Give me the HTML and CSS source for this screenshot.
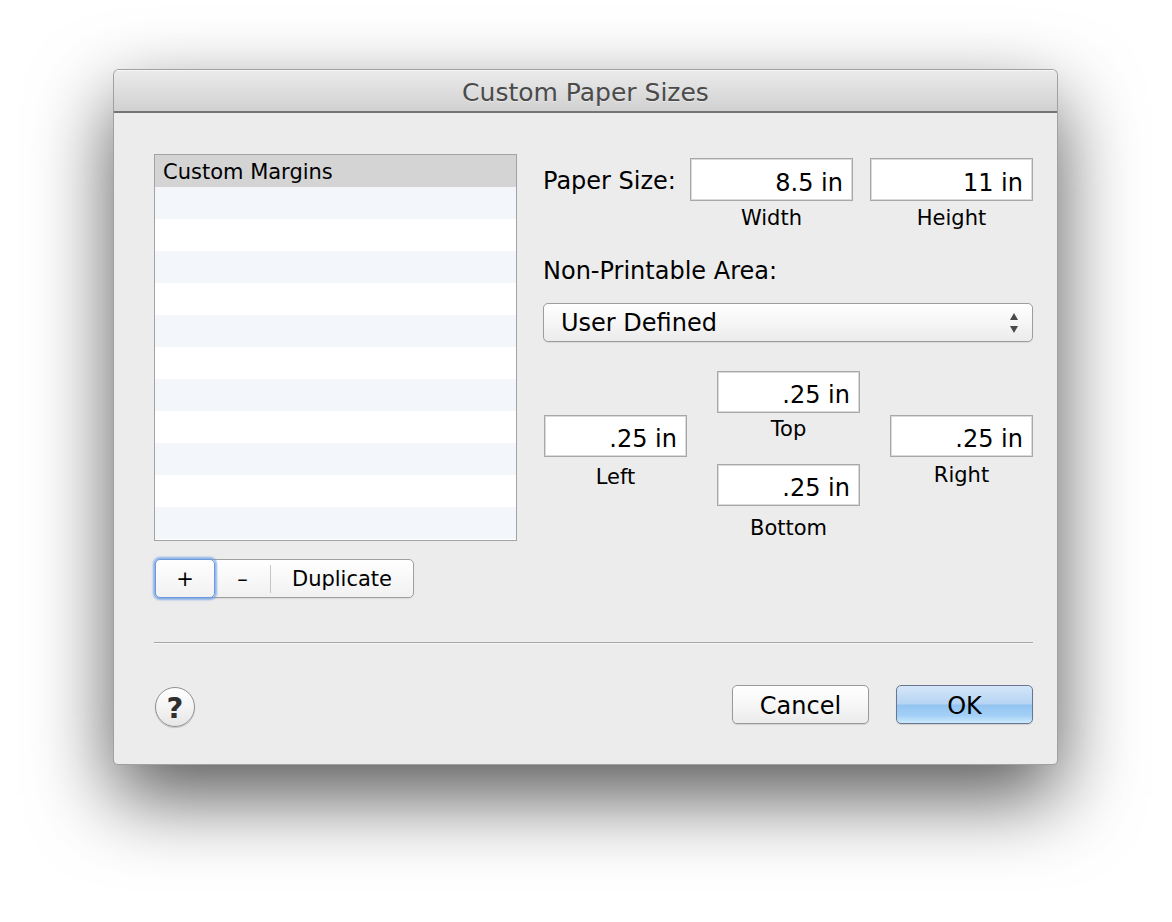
FILE: index.html
```html
<!DOCTYPE html>
<html>
<head>
<meta charset="utf-8">
<title>Custom Paper Sizes</title>
<link rel="stylesheet" href="styles.css">
</head>
<body>
<div class="stage">
  <div class="window">
    <div class="titlebar">Custom Paper Sizes</div>
    <div class="content">
      <div class="main">
        <div class="left">
          <div class="list">
            <div class="row selected">Custom Margins</div>
            <div class="row"></div>
            <div class="row"></div>
            <div class="row"></div>
            <div class="row"></div>
            <div class="row"></div>
            <div class="row"></div>
            <div class="row"></div>
            <div class="row"></div>
            <div class="row"></div>
            <div class="row"></div>
            <div class="row"></div>
          </div>
          <div class="segmented">
            <div class="seg seg-plus">+</div>
            <div class="seg seg-minus">–</div>
            <div class="seg-div"></div>
            <div class="seg seg-dup">Duplicate</div>
          </div>
        </div>
        <div class="right">
          <div class="paper">
            <div class="label-lg paper-label">Paper Size:</div>
            <div class="field paper-field">8.5 in</div>
            <div class="field paper-field paper-second">11 in</div>
            <div></div>
            <div class="caption paper-caption">Width</div>
            <div class="caption paper-caption paper-second">Height</div>
          </div>
          <div class="label-lg npa">Non-Printable Area:</div>
          <div class="popup">
            <span>User Defined</span>
            <svg class="arrows" width="8" height="20" viewBox="0 0 8 20">
              <path d="M4 0 L8 7 L0 7 Z" fill="#4a4a4a"/>
              <path d="M0 13 L8 13 L4 20 Z" fill="#4a4a4a"/>
            </svg>
          </div>
          <div class="margins">
            <div class="mcol mcol-side">
              <div class="field mfield">.25 in</div>
              <div class="caption cap-left">Left</div>
            </div>
            <div class="mcol">
              <div class="field mfield">.25 in</div>
              <div class="caption cap-top">Top</div>
              <div class="field mfield mfield-bottom">.25 in</div>
              <div class="caption cap-bottom">Bottom</div>
            </div>
            <div class="mcol mcol-side">
              <div class="field mfield">.25 in</div>
              <div class="caption cap-right">Right</div>
            </div>
          </div>
        </div>
      </div>
      <div class="sep"></div>
      <div class="footer">
        <div class="help">?</div>
        <div class="spacer"></div>
        <div class="btn btn-cancel">Cancel</div>
        <div class="btn btn-ok">OK</div>
      </div>
    </div>
  </div>
</div>
</body>
</html>
```
FILE: styles.css
```css
html, body {
  margin: 0;
  padding: 0;
  background: #ffffff;
}

body {
  width: 1172px;
  height: 922px;
  overflow: hidden;
  font-family: "DejaVu Sans", "Lucida Grande", "Noto Sans", sans-serif;
  color: #000;
}

.stage {
  padding: 69px 0 0 113px;
}

.window {
  width: 945px;
  box-sizing: border-box;
  border: 1px solid rgba(0, 0, 0, 0.32);
  border-radius: 6px 6px 5px 5px;
  background: #ececec;
  box-shadow: 0 32px 80px rgba(0, 0, 0, 0.66);
  overflow: hidden;
}

.titlebar {
  height: 36px;
  padding-top: 5px;
  line-height: 36px;
  text-align: center;
  font-size: 25px;
  color: #4b4b4b;
  text-shadow: 0 1px 0 rgba(255, 255, 255, 0.45);
  background: linear-gradient(#ebebeb, #d1d1d1);
  box-shadow: inset 0 1px 0 #f7f7f7;
  border-bottom: 2px solid #747474;
}

.content {
  padding: 41px 24px 37px 40px;
}

.main {
  display: flex;
  gap: 26px;
}

.left {
  width: 363px;
}

.list {
  height: 387px;
  box-sizing: border-box;
  border: 1px solid #a3a3a3;
  background: #fff;
  overflow: hidden;
}

.row {
  height: 32px;
  line-height: 32px;
  padding-left: 8px;
  font-size: 21px;
}

.row.selected {
  line-height: 34px;
}

.row:nth-child(even) {
  background: #f3f6fa;
}

.row.selected {
  background: #d4d4d4;
}

.segmented {
  margin: 18px 0 0 1px;
  display: flex;
  width: 259px;
  height: 39px;
  box-sizing: border-box;
  border: 1px solid #a0a0a0;
  border-radius: 5px;
  background: linear-gradient(#ffffff, #f1f1f1);
  box-shadow: 0 1px 1px rgba(0, 0, 0, 0.08);
}

.seg {
  font-size: 21px;
  line-height: 24px;
  display: flex;
  align-items: center;
  justify-content: center;
}

.seg-plus {
  width: 60px;
  margin: -1px 0 -1px -1px;
  box-sizing: border-box;
  border: 1px solid #6c9bdc;
  border-radius: 5px;
  background: linear-gradient(#ffffff, #f1f1f1);
  box-shadow: 0 0 2px 2px rgba(110, 160, 228, 0.75);
  position: relative;
  z-index: 1;
}

.seg-minus {
  width: 55px;
}

.seg-div {
  width: 1px;
  margin: 5px 0 4px;
  background: #c6c6c6;
}

.seg-dup {
  width: 142px;
}

.right {
  width: 490px;
  padding-top: 4px;
}

.paper {
  display: grid;
  grid-template-columns: 147px 163px 180px;
}

.paper-second {
  justify-self: end;
  width: 163px;
}

.label-lg {
  font-size: 24px;
  line-height: 28px;
  white-space: nowrap;
}

.paper-label {
  align-self: center;
  padding-top: 3px;
}

.field {
  box-sizing: border-box;
  border: 1px solid #a8a8a8;
  box-shadow: inset 0 0 0 1px #dadada;
  background: #fff;
  text-align: right;
  font-size: 24px;
  line-height: 28px;
  padding: 0 9px;
  white-space: nowrap;
}

.paper-field {
  height: 43px;
  padding-top: 10px;
}

.caption {
  font-size: 21px;
  line-height: 24px;
  text-align: center;
}

.paper-caption {
  margin-top: 5px;
}

.npa {
  margin-top: 27px;
}

.popup {
  margin-top: 18px;
  height: 39px;
  box-sizing: border-box;
  border: 1px solid #9d9d9d;
  border-radius: 5px;
  background: linear-gradient(#ffffff, #f6f6f6 50%, #ebebeb);
  box-shadow: 0 1px 1px rgba(0, 0, 0, 0.08);
  display: flex;
  align-items: center;
  justify-content: space-between;
  padding: 1px 14px 0 17px;
  font-size: 24px;
  line-height: 28px;
}

.arrows {
  display: block;
}

.margins {
  margin: 29px 0 0 1px;
  display: grid;
  grid-template-columns: repeat(3, 143px);
  justify-content: space-between;
  align-items: start;
}

.mcol {
  display: flex;
  flex-direction: column;
}

.mcol-side {
  margin-top: 44px;
}

.mfield {
  height: 42px;
  padding-top: 9px;
}

.mfield-bottom {
  margin-top: 23px;
}

.cap-top {
  margin-top: 4px;
}

.cap-bottom {
  margin-top: 10px;
}

.cap-left {
  margin-top: 8px;
}

.cap-right {
  margin-top: 6px;
}

.sep {
  margin-top: 44px;
  border-top: 1px solid #a6a6a6;
  border-bottom: 1px solid #f8f8f8;
}

.footer {
  margin-top: 41px;
  display: flex;
  align-items: flex-start;
}

.help {
  margin: 2px 0 0 1px;
  width: 40px;
  height: 40px;
  box-sizing: border-box;
  border: 1px solid #909090;
  border-radius: 50%;
  background: linear-gradient(#ffffff, #f4f4f4 50%, #e6e6e6);
  box-shadow: 0 1px 1px rgba(0, 0, 0, 0.18);
  display: flex;
  align-items: center;
  justify-content: center;
  font-weight: bold;
  font-size: 29px;
  line-height: 38px;
  color: #2f2f2f;
  padding-top: 2px;
}

.spacer {
  flex: 1;
}

.btn {
  width: 137px;
  height: 39px;
  box-sizing: border-box;
  border-radius: 5px;
  display: flex;
  align-items: center;
  justify-content: center;
  font-size: 24px;
  line-height: 28px;
  padding-top: 2px;
  box-shadow: 0 1px 1px rgba(0, 0, 0, 0.12);
}

.btn-cancel {
  border: 1px solid #9a9a9a;
  background: linear-gradient(#ffffff, #f7f7f7 50%, #ebebeb);
}

.btn-ok {
  margin-left: 27px;
  border: 1px solid #6a7591;
  background: linear-gradient(#d4e6f8 0%, #b6d4f3 48%, #93c4f1 52%, #a3d0f6 80%, #cdeafc 100%);
}
```
